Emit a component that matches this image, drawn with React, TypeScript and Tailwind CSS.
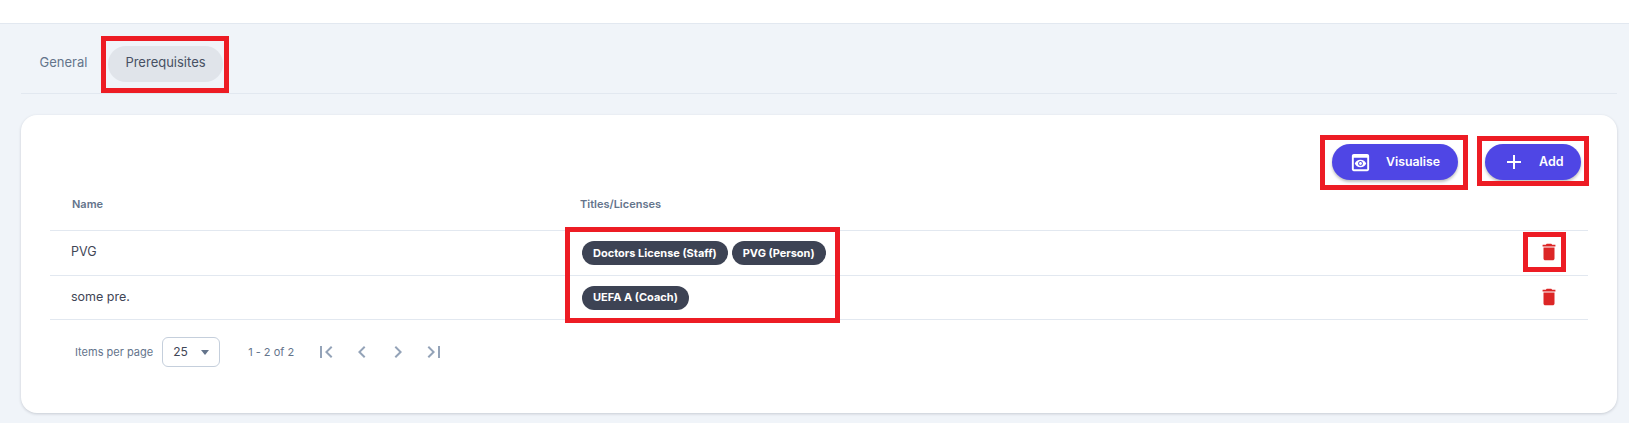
import React from 'react';

const font = { fontFamily: 'Inter, "Noto Sans", sans-serif' };

// red annotation frame drawn over a control
const Marker = ({ className }: { className: string }) => (
  <span className={`absolute border-[5px] border-[#ed1c24] pointer-events-none ${className}`}></span>
);

const Chip = ({ label }: { label: string }) => (
  <span className="h-6 px-[11px] rounded-full bg-[#3d4354] text-white text-[11px] font-bold flex items-center whitespace-nowrap">
    {label}
  </span>
);

const TrashIcon = () => (
  <svg width="22" height="22" viewBox="0 0 24 24" fill="#dc2626">
    <path d="M6 19c0 1.1.9 2 2 2h8c1.1 0 2-.9 2-2V7H6v12zM19 4h-3.5l-1-1h-5l-1 1H5v2h14V4z" />
  </svg>
);

const PageButton = ({ d }: { d: string }) => (
  <button className="w-9 h-9 flex items-center justify-center">
    <svg width="24" height="24" viewBox="0 0 24 24" fill="#94a3b8">
      <path d={d} />
    </svg>
  </button>
);

export default function App() {
  return (
    <div className="h-[423px] overflow-hidden bg-[#f0f4f9]" style={font}>
      <div className="h-6 bg-white border-b border-[#e2e8f0]"></div>

      <div className="pl-[21px] pr-3 pt-[22px]">
        {/* Tabs */}
        <div className="h-[48px] flex items-start border-b border-[#e2e8f0]">
          <button className="h-9 w-[85px] mr-[2px] pb-[2px] text-[13px] text-[#64748b] flex items-center justify-center">General</button>
          <div className="relative">
            <button className="h-9 w-[115px] pb-[2px] rounded-full bg-[#e0e4ea] text-[13px] text-[#475063] flex items-center justify-center">
              Prerequisites
            </button>
            <Marker className="-left-[7px] -right-[6px] -top-[10px] -bottom-[11px]" />
          </div>
        </div>

        {/* Card */}
        <div className="mt-[21px] h-[298px] bg-white rounded-2xl shadow-[0_1px_3px_rgba(15,23,42,0.18)] px-[29px] pt-[29px]">
          <div className="flex justify-end gap-[27px] pr-[7px]">
            <div className="relative">
              <button className="h-9 w-[126px] rounded-full bg-[#4f46e5] shadow-[0_2px_3px_rgba(0,0,0,0.25)] text-white text-[12.3px] font-semibold flex items-center pl-[17px] gap-[14px]">
                <svg width="23" height="23" viewBox="0 0 24 24" fill="#ffffff">
                  <path d="M19 3H5c-1.11 0-2 .9-2 2v14c0 1.1.89 2 2 2h14c1.1 0 2-.9 2-2V5c0-1.1-.89-2-2-2zm0 16H5V7h14v12zm-5.5-6c0 .83-.67 1.5-1.5 1.5s-1.5-.67-1.5-1.5.67-1.5 1.5-1.5 1.5.67 1.5 1.5zM12 9c-2.73 0-5.06 1.66-6 4 .94 2.34 3.27 4 6 4s5.06-1.66 6-4c-.94-2.34-3.27-4-6-4zm0 6.5c-1.38 0-2.5-1.12-2.5-2.5s1.12-2.5 2.5-2.5 2.5 1.12 2.5 2.5-1.12 2.5-2.5 2.5z" />
                </svg>
                Visualise
              </button>
              <Marker className="-left-3 -right-[10px] -top-[9px] -bottom-[10px]" />
            </div>
            <div className="relative">
              <button className="h-9 w-[96px] rounded-full bg-[#4f46e5] shadow-[0_2px_3px_rgba(0,0,0,0.25)] text-white text-[12.5px] font-semibold flex items-center pl-[17px] gap-[13px]">
                <svg width="24" height="24" viewBox="0 0 24 24" fill="#ffffff">
                  <path d="M19 13h-6v6h-2v-6H5v-2h6V5h2v6h6v2z" />
                </svg>
                Add
              </button>
              <Marker className="-left-2 -right-2 -top-2 -bottom-[6px]" />
            </div>
          </div>

          {/* Table */}
          <div className="h-[51px] pb-[2px] flex items-center border-b border-[#e2e8f0] text-[11px] font-semibold text-[#64748b]">
            <div className="w-[530px] pl-[22px]">Name</div>
            <div>Titles/Licenses</div>
          </div>
          <div className="h-[45px] flex items-center border-b border-[#e2e8f0] text-[12.5px] text-[#3f4656]">
            <div className="w-[532px] pl-[21px] pb-[2px]">PVG</div>
            <div className="relative flex gap-[4px]">
              <Chip label="Doctors License (Staff)" />
              <Chip label="PVG (Person)" />
            </div>
            <div className="ml-auto relative mr-[28px] mb-[2px] flex">
              <TrashIcon />
              <Marker className="-left-[15px] -right-[6px] -top-[9px] -bottom-[9px]" />
            </div>
          </div>
          <div className="relative h-11 flex items-center border-b border-[#e2e8f0] text-[12.5px] text-[#3f4656]">
            <div className="w-[532px] pl-[21px]">some pre.</div>
            <Chip label="UEFA A (Coach)" />
            <div className="ml-auto mr-[28px] mb-[2px] flex">
              <TrashIcon />
            </div>
            <Marker className="left-[515px] w-[275px] -top-[49px] h-[96px]" />
          </div>

          {/* Pagination */}
          <div className="mt-[14px] flex items-center pl-[25px] text-[11px] text-[#64748b]">
            <span>Items per page</span>
            <div className="ml-[9px] w-[58px] h-[30px] border border-[#c5cfdc] rounded-md flex items-center justify-between px-[10px] text-[12px] text-[#3f4656]">
              25
              <span className="w-0 h-0 border-x-[4px] border-x-transparent border-t-[5px] border-t-[#64748b]"></span>
            </div>
            <span className="ml-7 mr-[14px]">1 - 2 of 2</span>
            <PageButton d="M18.41 16.59L13.82 12l4.59-4.59L17 6l-6 6 6 6zM6 6h2v12H6z" />
            <PageButton d="M15.41 7.41L14 6l-6 6 6 6 1.41-1.41L10.83 12z" />
            <PageButton d="M10 6L8.59 7.41 13.17 12l-4.58 4.59L10 18l6-6z" />
            <PageButton d="M5.59 7.41L10.18 12l-4.59 4.59L7 18l6-6-6-6zM16 6h2v12h-2z" />
          </div>
        </div>
      </div>
    </div>
  );
}
